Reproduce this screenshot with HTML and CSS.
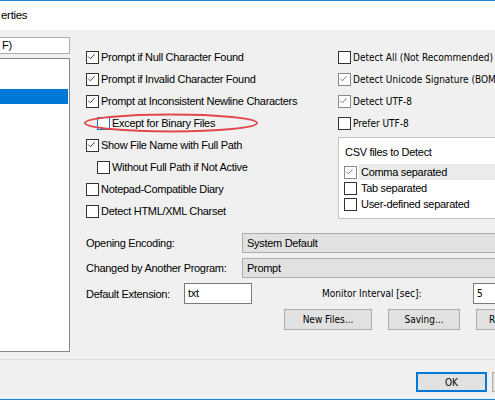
FILE: index.html
```html
<!DOCTYPE html>
<html lang="en">
<head>
    <meta charset="UTF-8">
    <meta name="viewport" content="width=device-width, initial-scale=1.0">
    <title>Properties</title>
    <link rel="stylesheet" href="styles.css">
</head>
<body>
    <div class="window">
      <div class="titlebar">erties</div>
      <div class="main">
        <div class="sidebar">
          <div class="search">F)</div>
          <div class="list">
            <div class="item"></div>
            <div class="item"></div>
            <div class="item selected"></div>
          </div>
        </div>

        <div class="panel">
          <div class="columns">
            <div class="col-left">
              <div class="row"><span class="cb"><svg viewBox="0 0 13 13"><path d="M2.5 6.5 5 9 10 3.5"/></svg></span><span>Prompt if Null Character Found</span></div>
              <div class="row"><span class="cb"><svg viewBox="0 0 13 13"><path d="M2.5 6.5 5 9 10 3.5"/></svg></span><span>Prompt if Invalid Character Found</span></div>
              <div class="row"><span class="cb"><svg viewBox="0 0 13 13"><path d="M2.5 6.5 5 9 10 3.5"/></svg></span><span>Prompt at Inconsistent Newline Characters</span></div>
              <div class="row indent"><span class="cb focus"></span><span>Except for Binary Files</span></div>
              <div class="row"><span class="cb"><svg viewBox="0 0 13 13"><path d="M2.5 6.5 5 9 10 3.5"/></svg></span><span>Show File Name with Full Path</span></div>
              <div class="row indent"><span class="cb"></span><span>Without Full Path if Not Active</span></div>
              <div class="row"><span class="cb"></span><span>Notepad-Compatible Diary</span></div>
              <div class="row"><span class="cb"></span><span>Detect HTML/XML Charset</span></div>
              <!-- red annotation ring -->
              <svg class="ring" width="176" height="20" viewBox="0 0 176 20"><ellipse cx="88" cy="10" rx="86" ry="8.5"/></svg>
            </div>

            <div class="col-right">
              <div class="row alt"><span class="cb"></span><span>Detect All (Not Recommended)</span></div>
              <div class="row alt"><span class="cb muted"><svg viewBox="0 0 13 13"><path d="M2.5 6.5 5 9 10 3.5"/></svg></span><span>Detect Unicode Signature (BOM)</span></div>
              <div class="row alt"><span class="cb muted"><svg viewBox="0 0 13 13"><path d="M2.5 6.5 5 9 10 3.5"/></svg></span><span>Detect UTF-8</span></div>
              <div class="row alt"><span class="cb"></span><span>Prefer UTF-8</span></div>

              <div class="group">
                <div class="group-title">CSV files to Detect</div>
                <div class="grow"><span class="cb muted"><svg viewBox="0 0 13 13"><path d="M2.5 6.5 5 9 10 3.5"/></svg></span><span class="glabel hot">Comma separated</span></div>
                <div class="grow"><span class="cb"></span><span class="glabel">Tab separated</span></div>
                <div class="grow"><span class="cb"></span><span class="glabel">User-defined separated</span></div>
              </div>
            </div>
          </div>

          <div class="fields">
            <div class="field">
              <span class="label">Opening Encoding:</span>
              <div class="combo">System Default</div>
            </div>
            <div class="field">
              <span class="label">Changed by Another Program:</span>
              <div class="combo">Prompt</div>
            </div>
            <div class="field">
              <span class="label short">Default Extension:</span>
              <div class="input ext">txt</div>
              <span class="label monitor alt">Monitor Interval [sec]:</span>
              <div class="input num alt">5</div>
            </div>
          </div>

          <div class="actions">
            <button class="btn new">New Files...</button>
            <button class="btn save">Saving...</button>
            <button class="btn reset">Reset...</button>
          </div>
        </div>
      </div>

      <div class="footer">
        <button class="btn ok">OK</button>
        <button class="btn cancel">Cancel</button>
      </div>
    </div>
</body>
</html>
```

FILE: styles.css
```css
body {
  margin: 0;
  width: 495px;
  height: 400px;
  overflow: hidden;
  background: #f0f0f0;
  font-family: "Liberation Sans", Arial, sans-serif;
  font-size: 11px;
  letter-spacing: -0.3px;
  color: #000;
}
.window {
  width: 495px;
  height: 398px;
  border-top: 1px solid #1883d7;
  border-bottom: 1px solid #1883d7;
  overflow: hidden;
}
.titlebar {
  height: 29px;
  line-height: 29px;
  background: #fff;
  padding-left: 1px;
  font-size: 11.5px;
}
.main {
  display: flex;
  height: 329px;
}

/* left tree */
.sidebar {
  width: 70px;
  flex-shrink: 0;
  padding-top: 7px;
}
.search {
  margin-left: -10px;
  height: 15px;
  line-height: 15px;
  border: 1px solid #abadb3;
  background: #fff;
  padding-left: 11px;
  width: 67px;
}
.list {
  margin-top: 4px;
  margin-left: -10px;
  width: 78px;
  height: 292px;
  border: 1px solid #828790;
  background: #fff;
}
.item {
  height: 15px;
}
.item.selected {
  background: #0078d7;
  margin-right: 1px;
}

/* options */
.panel {
  margin-left: 16px;
  padding-top: 16px;
  flex: 1;
}
.columns {
  display: flex;
}
.col-left {
  width: 252px;
  flex-shrink: 0;
  position: relative;
}
.col-right {
  width: 240px;
  flex-shrink: 0;
  white-space: nowrap;
}
.row {
  height: 22px;
  display: flex;
  align-items: center;
  white-space: nowrap;
}
.row.indent {
  padding-left: 11px;
}
.ring {
  position: absolute;
  left: -3px;
  top: 67px;
  pointer-events: none;
}
.ring ellipse {
  fill: none;
  stroke: #e2474b;
  stroke-width: 2;
}
.cb {
  display: block;
  width: 11px;
  height: 11px;
  border: 1px solid #333;
  background: #fff;
  margin-right: 2px;
  flex-shrink: 0;
}
.cb svg {
  display: block;
  width: 11px;
  height: 11px;
  margin: 0;
}
.cb path {
  fill: none;
  stroke: #333;
  stroke-width: 1.1;
  transform: translate(-1px, -1px);
}
.cb.muted {
  border-color: #8a8a8a;
}
.cb.muted path {
  stroke: #777;
}
.cb.focus {
  border-color: #1a70c8;
}
.alt {
  font-family: "DejaVu Sans Condensed", "DejaVu Sans", sans-serif;
  font-stretch: condensed;
  font-size: 10px;
  letter-spacing: 0;
}

.group {
  margin-top: 3px;
  border: 1px solid #c4c4c4;
  background: #fff;
  height: 67px;
  padding: 7px 0 6px 5px;
}
.group-title {
  height: 14px;
  line-height: 14px;
  padding-left: 1px;
  margin-bottom: 5px;
}
.grow {
  height: 16px;
  display: flex;
  align-items: center;
}
.glabel {
  padding-left: 2px;
  height: 16px;
  line-height: 16px;
  flex: 1;
}
.glabel.hot {
  background: #ebebeb;
}

/* lower fields */
.fields {
  margin-top: 11px;
}
.field {
  display: flex;
  align-items: center;
  height: 20px;
  margin-bottom: 5px;
  white-space: nowrap;
}
.field:last-child {
  height: 21px;
}
.label {
  width: 156px;
  flex-shrink: 0;
}
.label.short {
  width: 98px;
}
.label.monitor {
  width: 151px;
  margin-left: 70px;
}
.combo {
  width: 300px;
  flex-shrink: 0;
  height: 18px;
  line-height: 18px;
  border: 1px solid #adadad;
  background: #e1e1e1;
  padding-left: 4px;
}
.input {
  height: 19px;
  line-height: 19px;
  border: 1px solid #7a7a7a;
  background: #fff;
  padding-left: 3px;
  flex-shrink: 0;
}
.ext {
  width: 63px;
}
.num {
  width: 60px;
}

.actions {
  display: flex;
  gap: 16px;
  padding-left: 198px;
}
.btn {
  height: 21px;
  border: 1px solid #adadad;
  background: #e1e1e1;
  font-family: "DejaVu Sans Condensed", "DejaVu Sans", sans-serif;
  font-stretch: condensed;
  font-size: 10px;
  color: #000;
  padding: 0;
  flex-shrink: 0;
}
.new {
  width: 88px;
}
.save {
  width: 72px;
}
.reset {
  width: 72px;
  text-align: left;
  padding-left: 12px;
}

.footer {
  height: 40px;
  border-top: 1px solid #dcdcdc;
  display: flex;
  gap: 5px;
  padding-left: 416px;
  padding-top: 12px;
  box-sizing: border-box;
}
.ok {
  width: 71px;
  height: 20px;
  border: 2px solid #0078d7;
}
.cancel {
  width: 71px;
  height: 20px;
}
```
